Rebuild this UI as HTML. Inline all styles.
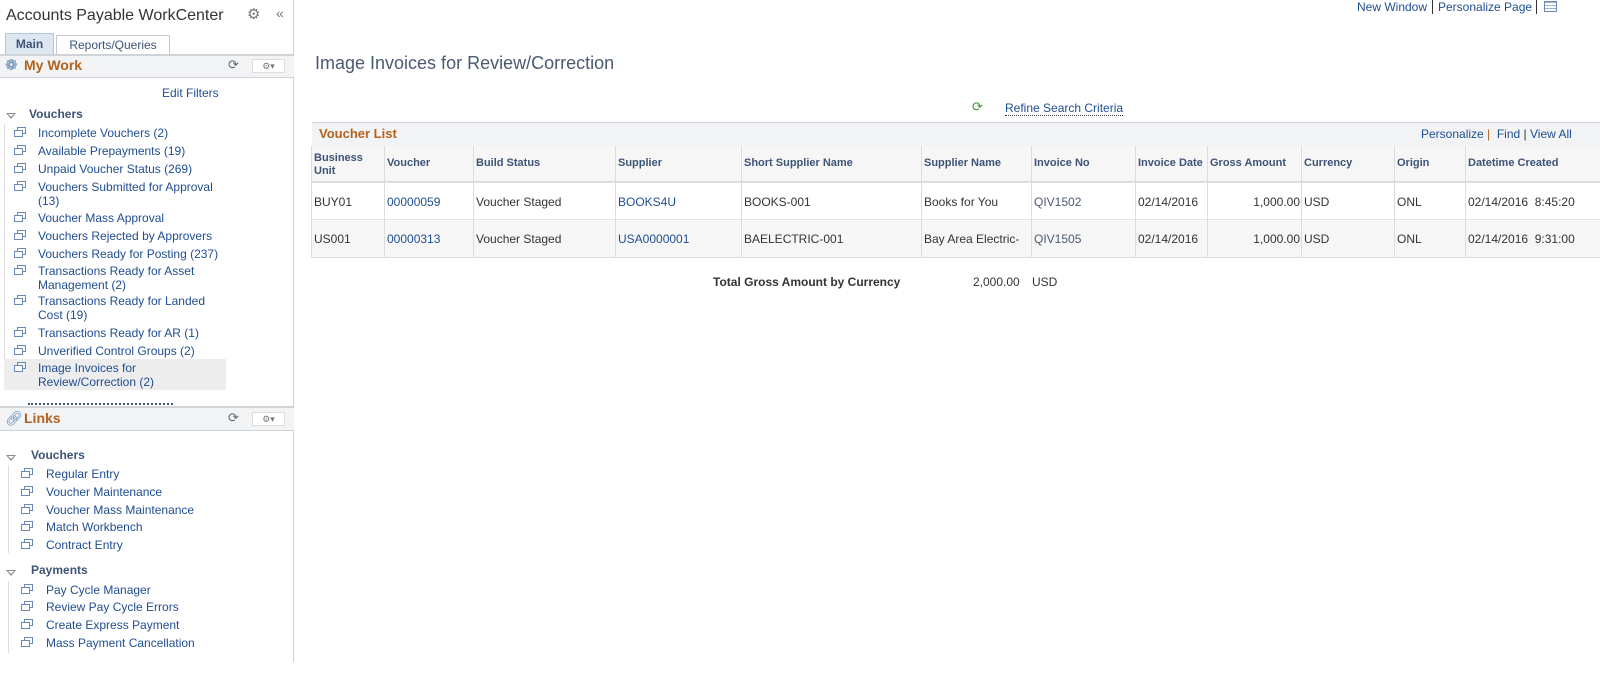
<!DOCTYPE html>
<html><head><style>
*{margin:0;padding:0;box-sizing:border-box}
body{width:1600px;height:675px;overflow:hidden;background:#fff;font-family:"Liberation Sans",Arial,sans-serif;font-size:12px;color:#333;position:relative}
.a{position:absolute;white-space:nowrap}
.lk{color:#1f4d91}
.hd{color:#3d5477;font-weight:bold;font-size:11px}
.ic{position:absolute;width:9px;height:7px;border:1px solid #6b89b8}
.ic:after{content:"";position:absolute;left:-4px;top:2px;width:7px;height:5px;border:1px solid #6b89b8;background:#fff}
.tri{position:absolute;width:0;height:0;border-left:5px solid transparent;border-right:5px solid transparent;border-top:6px solid #888}
.tri:after{content:"";position:absolute;left:-3px;top:-5px;border-left:3px solid transparent;border-right:3px solid transparent;border-top:3px solid #fff}
</style></head><body>
<div class="a" style="left:0;top:0;width:294px;height:662px;border-right:1px solid #cfd3d8"></div>
<div class="a" style="left:6px;top:7px;font-size:16px;color:#333">Accounts Payable WorkCenter</div>
<div class="a" style="left:247px;top:5px;font-size:15px;color:#777">⚙</div>
<div class="a" style="left:276px;top:5px;font-size:14px;color:#777">«</div>
<div class="a" style="left:5px;top:33px;width:49px;height:21px;background:#dde7f2;border:1px solid #b5c5d8;border-bottom:none;font-weight:bold;color:#3d5477;text-align:center;line-height:20px">Main</div>
<div class="a" style="left:56px;top:35px;width:114px;height:19px;border:1px solid #c5c9cd;border-bottom:none;color:#3d5477;text-align:center;line-height:18px">Reports/Queries</div>
<div class="a" style="left:0;top:54px;width:294px;height:24px;background:#f1f3f4;border-top:2px solid #cfd3d8;border-bottom:1px solid #cfd3d8"></div>
<div class="a" style="left:5px;top:56px;font-size:15px;color:#5a84b0">❁</div>
<div class="a" style="left:24px;top:57px;font-size:14px;font-weight:bold;color:#b2621e">My Work</div>
<div class="a" style="left:228px;top:57px;font-size:13px;color:#667">⟳</div>
<div class="a" style="left:252px;top:59px;width:33px;height:14px;background:#fff;border:1px solid #ddd;font-size:9px;color:#777;text-align:center;line-height:12px">⚙▾</div>
<div class="a lk" style="left:162px;top:86px">Edit Filters</div>
<div class="tri" style="left:6px;top:113px"></div>
<div class="a hd" style="left:29px;top:107px;font-size:12px">Vouchers</div>
<div class="a" style="left:4px;top:124px;width:1px;height:266px;background:#ddd"></div>
<div class="a" style="left:4px;top:359px;width:222px;height:31px;background:#ededed"></div>
<div id="l1"></div>
<div class="a" style="left:28px;top:403px;width:145px;height:2px;border-top:2px dotted #3d5477"></div>
<div class="a" style="left:0;top:406px;width:294px;height:25px;background:#f1f3f4;border-top:2px solid #cfd3d8;border-bottom:1px solid #cfd3d8"></div>
<div class="a" style="left:5px;top:410px;font-size:14px;color:#5a84b0">🔗︎</div>
<div class="a" style="left:24px;top:410px;font-size:14px;font-weight:bold;color:#b2621e">Links</div>
<div class="a" style="left:228px;top:410px;font-size:13px;color:#667">⟳</div>
<div class="a" style="left:252px;top:412px;width:33px;height:14px;background:#fff;border:1px solid #ddd;font-size:9px;color:#777;text-align:center;line-height:12px">⚙▾</div>
<div class="tri" style="left:6px;top:455px"></div>
<div class="a hd" style="left:31px;top:448px;font-size:12px">Vouchers</div>
<div class="a" style="left:8px;top:465px;width:1px;height:88px;background:#ddd"></div>
<div class="tri" style="left:6px;top:570px"></div>
<div class="a hd" style="left:31px;top:563px;font-size:12px">Payments</div>
<div class="a" style="left:8px;top:581px;width:1px;height:72px;background:#ddd"></div>
<div id="l2"></div>
<div class="a lk" style="left:1357px;top:0px">New Window</div>
<div class="a" style="left:1432px;top:0;width:1px;height:14px;background:#333"></div>
<div class="a lk" style="left:1438px;top:0px">Personalize Page</div>
<div class="a" style="left:1536px;top:0;width:1px;height:14px;background:#333"></div>
<div class="a" style="left:1544px;top:1px;width:13px;height:11px;border:1px solid #6b89b8;background:repeating-linear-gradient(#9bb3d4 0 1px,#fff 1px 3px)"></div>
<div class="a" style="left:315px;top:53px;font-size:18px;color:#4a5a72">Image Invoices for Review/Correction</div>
<div class="a" style="left:972px;top:99px;font-size:13px;color:#3a9a3a">⟳</div>
<div class="a lk" style="left:1005px;top:101px;border-bottom:1px dotted #333">Refine Search Criteria</div>
<div class="a" style="left:312px;top:122px;width:1288px;height:24px;background:#f1f3f4;border-top:1px solid #cfd3d8"></div>
<div class="a" style="left:319px;top:126px;font-size:13px;font-weight:bold;color:#b2621e">Voucher List</div>
<div class="a lk" style="left:1421px;top:127px">Personalize <span style="color:#b2621e">|</span>&nbsp; Find <span style="color:#333">|</span> View All</div>
<div class="a" style="left:312px;top:146px;width:1288px;height:37px;background:#f6f6f6;border-bottom:2px solid #ddd"></div>
<div class="a" style="left:312px;top:183px;width:1288px;height:37px;background:#fff;border-bottom:1px solid #e2e2e2"></div>
<div class="a" style="left:312px;top:221px;width:1288px;height:37px;background:#f6f6f6;border-bottom:1px solid #ddd"></div>
<div class="a" style="left:311px;top:146px;width:1px;height:112px;background:#ddd"></div>
<div id="tb"></div>
<div class="a" style="left:713px;top:275px;font-weight:bold">Total Gross Amount by Currency</div>
<div class="a" style="left:973px;top:275px">2,000.00</div>
<div class="a" style="left:1032px;top:275px">USD</div>
<script>
var L1=[[132,"Incomplete Vouchers (2)"],[150,"Available Prepayments (19)"],[168,"Unpaid Voucher Status (269)"],[186,"Vouchers Submitted for Approval<br>(13)"],[217,"Voucher Mass Approval"],[235,"Vouchers Rejected by Approvers"],[253,"Vouchers Ready for Posting (237)"],[270,"Transactions Ready for Asset<br>Management (2)"],[300,"Transactions Ready for Landed<br>Cost (19)"],[332,"Transactions Ready for AR (1)"],[350,"Unverified Control Groups (2)"],[367,"Image Invoices for<br>Review/Correction (2)"]];
var h="";L1.forEach(function(r){h+='<div class="ic" style="left:17px;top:'+(r[0]-5)+'px"></div><div class="a lk" style="left:38px;top:'+(r[0]-6)+'px;line-height:14px">'+r[1]+'</div>'});
document.getElementById("l1").outerHTML=h;
var L2=[[474,"Regular Entry"],[492,"Voucher Maintenance"],[510,"Voucher Mass Maintenance"],[527,"Match Workbench"],[545,"Contract Entry"],[590,"Pay Cycle Manager"],[607,"Review Pay Cycle Errors"],[625,"Create Express Payment"],[643,"Mass Payment Cancellation"]];
h="";L2.forEach(function(r){h+='<div class="ic" style="left:24px;top:'+(r[0]-6)+'px"></div><div class="a lk" style="left:46px;top:'+(r[0]-7)+'px">'+r[1]+'</div>'});
document.getElementById("l2").outerHTML=h;
var X=[312,385,474,616,742,922,1032,1136,1208,1302,1395,1466,1600];
var H=["Business<br>Unit","Voucher","Build Status","Supplier","Short Supplier Name","Supplier Name","Invoice No","Invoice Date","Gross Amount","Currency","Origin","Datetime Created"];
var R=[["BUY01","00000059","Voucher Staged","BOOKS4U","BOOKS-001","Books for You","QIV1502","02/14/2016","1,000.00","USD","ONL","02/14/2016&nbsp; 8:45:20"],["US001","00000313","Voucher Staged","USA0000001","BAELECTRIC-001","Bay Area Electric-","QIV1505","02/14/2016","1,000.00","USD","ONL","02/14/2016&nbsp; 9:31:00"]];
var lk=[0,1,0,1,0,0,2,0,0,0,0,0];
h="";for(var i=0;i<12;i++){var w=X[i+1]-X[i];
if(i<11)h+='<div class="a" style="left:'+(X[i+1]-1)+'px;top:146px;width:1px;height:112px;background:#ddd"></div>';
h+='<div class="a hd" style="left:'+(X[i]+2)+'px;top:'+(i==0?152:157)+'px;line-height:13px">'+H[i]+'</div>';
R.forEach(function(r,j){var y=j?232:195;var st=lk[i]==1?'color:#1f4d91':(lk[i]==2?'color:#4a5a72':'color:#333');
if(i==8)h+='<div class="a" style="left:'+X[i]+'px;top:'+y+'px;width:'+(w-2)+'px;text-align:right;color:#333">'+r[i]+'</div>';
else h+='<div class="a" style="left:'+(X[i]+2)+'px;top:'+y+'px;'+st+'">'+r[i]+'</div>'});}
document.getElementById("tb").outerHTML=h;
</script>
</body></html>
